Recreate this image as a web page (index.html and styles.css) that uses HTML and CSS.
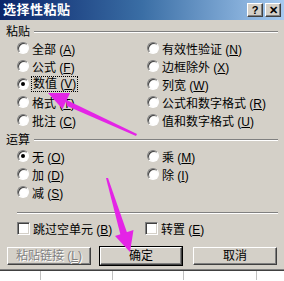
FILE: index.html
```html
<!DOCTYPE html>
<html lang="zh-CN">
<head>
    <meta charset="UTF-8">
    <title>选择性粘贴</title>
    <link rel="stylesheet" href="styles.css">
</head>
<body>
    <div class="dialog">
        <div class="titlebar">
            <span class="title">选择性粘贴</span>
            <div class="title-buttons">
                <span class="tbtn">?</span>
                <span class="tbtn">✕</span>
            </div>
        </div>

        <div class="group-label"><span>粘贴</span><i class="groove"></i></div>
        <div class="options">
            <label class="opt"><span class="radio"></span><span>全部 (<u>A</u>)</span></label>
            <label class="opt"><span class="radio"></span><span>有效性验证 (<u>N</u>)</span></label>
            <label class="opt"><span class="radio"></span><span>公式 (<u>F</u>)</span></label>
            <label class="opt"><span class="radio"></span><span>边框除外 (<u>X</u>)</span></label>
            <label class="opt"><span class="radio checked"></span><span class="focus">数值 (<u>V</u>)</span></label>
            <label class="opt"><span class="radio"></span><span>列宽 (<u>W</u>)</span></label>
            <label class="opt"><span class="radio"></span><span>格式 (<u>T</u>)</span></label>
            <label class="opt"><span class="radio"></span><span>公式和数字格式 (<u>R</u>)</span></label>
            <label class="opt"><span class="radio"></span><span>批注 (<u>C</u>)</span></label>
            <label class="opt"><span class="radio"></span><span>值和数字格式 (<u>U</u>)</span></label>
        </div>

        <div class="group-label second"><span>运算</span><i class="groove"></i></div>
        <div class="options">
            <label class="opt"><span class="radio checked"></span><span>无 (<u>O</u>)</span></label>
            <label class="opt"><span class="radio"></span><span>乘 (<u>M</u>)</span></label>
            <label class="opt"><span class="radio"></span><span>加 (<u>D</u>)</span></label>
            <label class="opt"><span class="radio"></span><span>除 (<u>I</u>)</span></label>
            <label class="opt"><span class="radio"></span><span>减 (<u>S</u>)</span></label>
        </div>

        <div class="separator"></div>

        <div class="options checks">
            <label class="opt"><span class="checkbox"></span><span>跳过空单元 (<u>B</u>)</span></label>
            <label class="opt"><span class="checkbox"></span><span>转置 (<u>E</u>)</span></label>
        </div>

        <div class="buttons">
            <button class="btn disabled">粘贴链接 (<u>L</u>)</button>
            <button class="btn default">确定</button>
            <button class="btn">取消</button>
        </div>
    </div>

    <div class="sheet">
        <span class="cell c1"></span>
        <span class="cell c2"></span>
        <span class="cell c3"></span>
        <span class="cell c4"></span>
    </div>

    <!-- annotation arrows drawn over the dialog -->
    <svg class="arrows" width="284" height="281" viewBox="0 0 284 281">
        <polygon points="137,134 136,136 67,106 65.5,99.5" fill="#e424e6"/>
        <polygon points="48,93 70,93 62.5,109" fill="#e424e6"/>
        <polygon points="106,178 108,178 127.5,234 120.5,235" fill="#e424e6"/>
        <polygon points="130,252 133.5,230 115,236" fill="#e424e6"/>
    </svg>
</body>
</html>
```

FILE: styles.css
```css
* {
    margin: 0;
    padding: 0;
    box-sizing: border-box;
}

body {
    width: 284px;
    height: 281px;
    overflow: hidden;
    position: relative;
    background: #fff;
    font-family: "Liberation Sans", "Noto Sans CJK SC", sans-serif;
    font-size: 12px;
    color: #000;
}

.dialog {
    height: 271px;
    background: #d4d0c8;
    border-bottom: 1px solid #404040;
    box-shadow: inset 0 -1px 0 #808080;
}

.titlebar {
    height: 20px;
    display: flex;
    align-items: center;
    justify-content: space-between;
    background: linear-gradient(to right, #0a246a 0%, #3a6ea5 50%, #a6caf0 100%);
    padding: 0 3px 0 3px;
}

.title {
    color: #fff;
    font-weight: bold;
    font-size: 13px;
    letter-spacing: 0.5px;
    line-height: 20px;
}

.title-buttons {
    display: flex;
    gap: 2px;
}

.tbtn {
    width: 16px;
    height: 14px;
    display: flex;
    align-items: center;
    justify-content: center;
    background: #d4d0c8;
    font-weight: bold;
    font-size: 11px;
    line-height: 1;
    border-top: 1px solid #fff;
    border-left: 1px solid #fff;
    border-right: 1px solid #404040;
    border-bottom: 1px solid #404040;
    box-shadow: inset -1px -1px 0 #808080;
}

.group-label {
    display: flex;
    align-items: center;
    height: 14px;
    margin-top: 5px;
    padding: 0 6px 0 6px;
    line-height: 14px;
}

.group-label.second {
    margin-top: 4px;
}

.groove {
    flex: 1;
    height: 2px;
    margin-left: 4px;
    border-top: 1px solid #808080;
    border-bottom: 1px solid #fff;
}

.options {
    display: grid;
    grid-template-columns: 130px 1fr;
    padding-left: 17px;
}

.opt {
    height: 18px;
    display: flex;
    align-items: center;
    gap: 3px;
    white-space: pre;
}

.radio {
    width: 12px;
    height: 12px;
    border-radius: 50%;
    flex-shrink: 0;
    position: relative;
    background: radial-gradient(circle at 60% 60%, #fff 40%, #e8e6e0 100%);
    border: 1px solid #808080;
    border-right-color: #fff;
    border-bottom-color: #fff;
    box-shadow: inset 1px 1px 0 #404040;
}

.radio.checked::after {
    content: "";
    position: absolute;
    left: 3px;
    top: 3px;
    width: 4px;
    height: 4px;
    border-radius: 50%;
    background: #000;
}

.focus {
    outline: 1px dotted #000;
    padding: 0 1px;
    line-height: 14px;
}

.separator {
    height: 2px;
    margin: 11px 6px 0 17px;
    border-top: 1px solid #808080;
    border-bottom: 1px solid #fff;
}

.checks {
    margin-top: 5px;
    grid-template-columns: 128px 1fr;
}

.checkbox {
    width: 13px;
    height: 13px;
    flex-shrink: 0;
    background: #fff;
    border-top: 1px solid #808080;
    border-left: 1px solid #808080;
    border-right: 1px solid #fff;
    border-bottom: 1px solid #fff;
    box-shadow: inset 1px 1px 0 #404040, inset -1px -1px 0 #d4d0c8;
}

.buttons {
    display: flex;
    padding-left: 7px;
    margin-top: 10px;
}

.btn {
    height: 18px;
    width: 84px;
    font-family: inherit;
    font-size: 12px;
    line-height: 1;
    white-space: pre;
    background: #d4d0c8;
    color: #000;
    border-top: 1px solid #fff;
    border-left: 1px solid #fff;
    border-right: 1px solid #404040;
    border-bottom: 1px solid #404040;
    box-shadow: inset -1px -1px 0 #808080;
}

.btn.disabled {
    color: #808080;
    text-shadow: 1px 1px 0 #fff;
}

.btn.default {
    width: 82px;
    margin-left: 9px;
    margin-right: 11px;
    outline: 1px solid #000;
}

.sheet {
    display: flex;
    height: 9px;
}

.cell {
    height: 100%;
    border-right: 1px solid #c0c0c0;
}

.c1 { width: 41px; }
.c2 { width: 72px; }
.c3 { width: 71px; }
.c4 { width: 73px; }

.arrows {
    position: absolute;
    left: 0;
    top: 0;
    pointer-events: none;
}
```
